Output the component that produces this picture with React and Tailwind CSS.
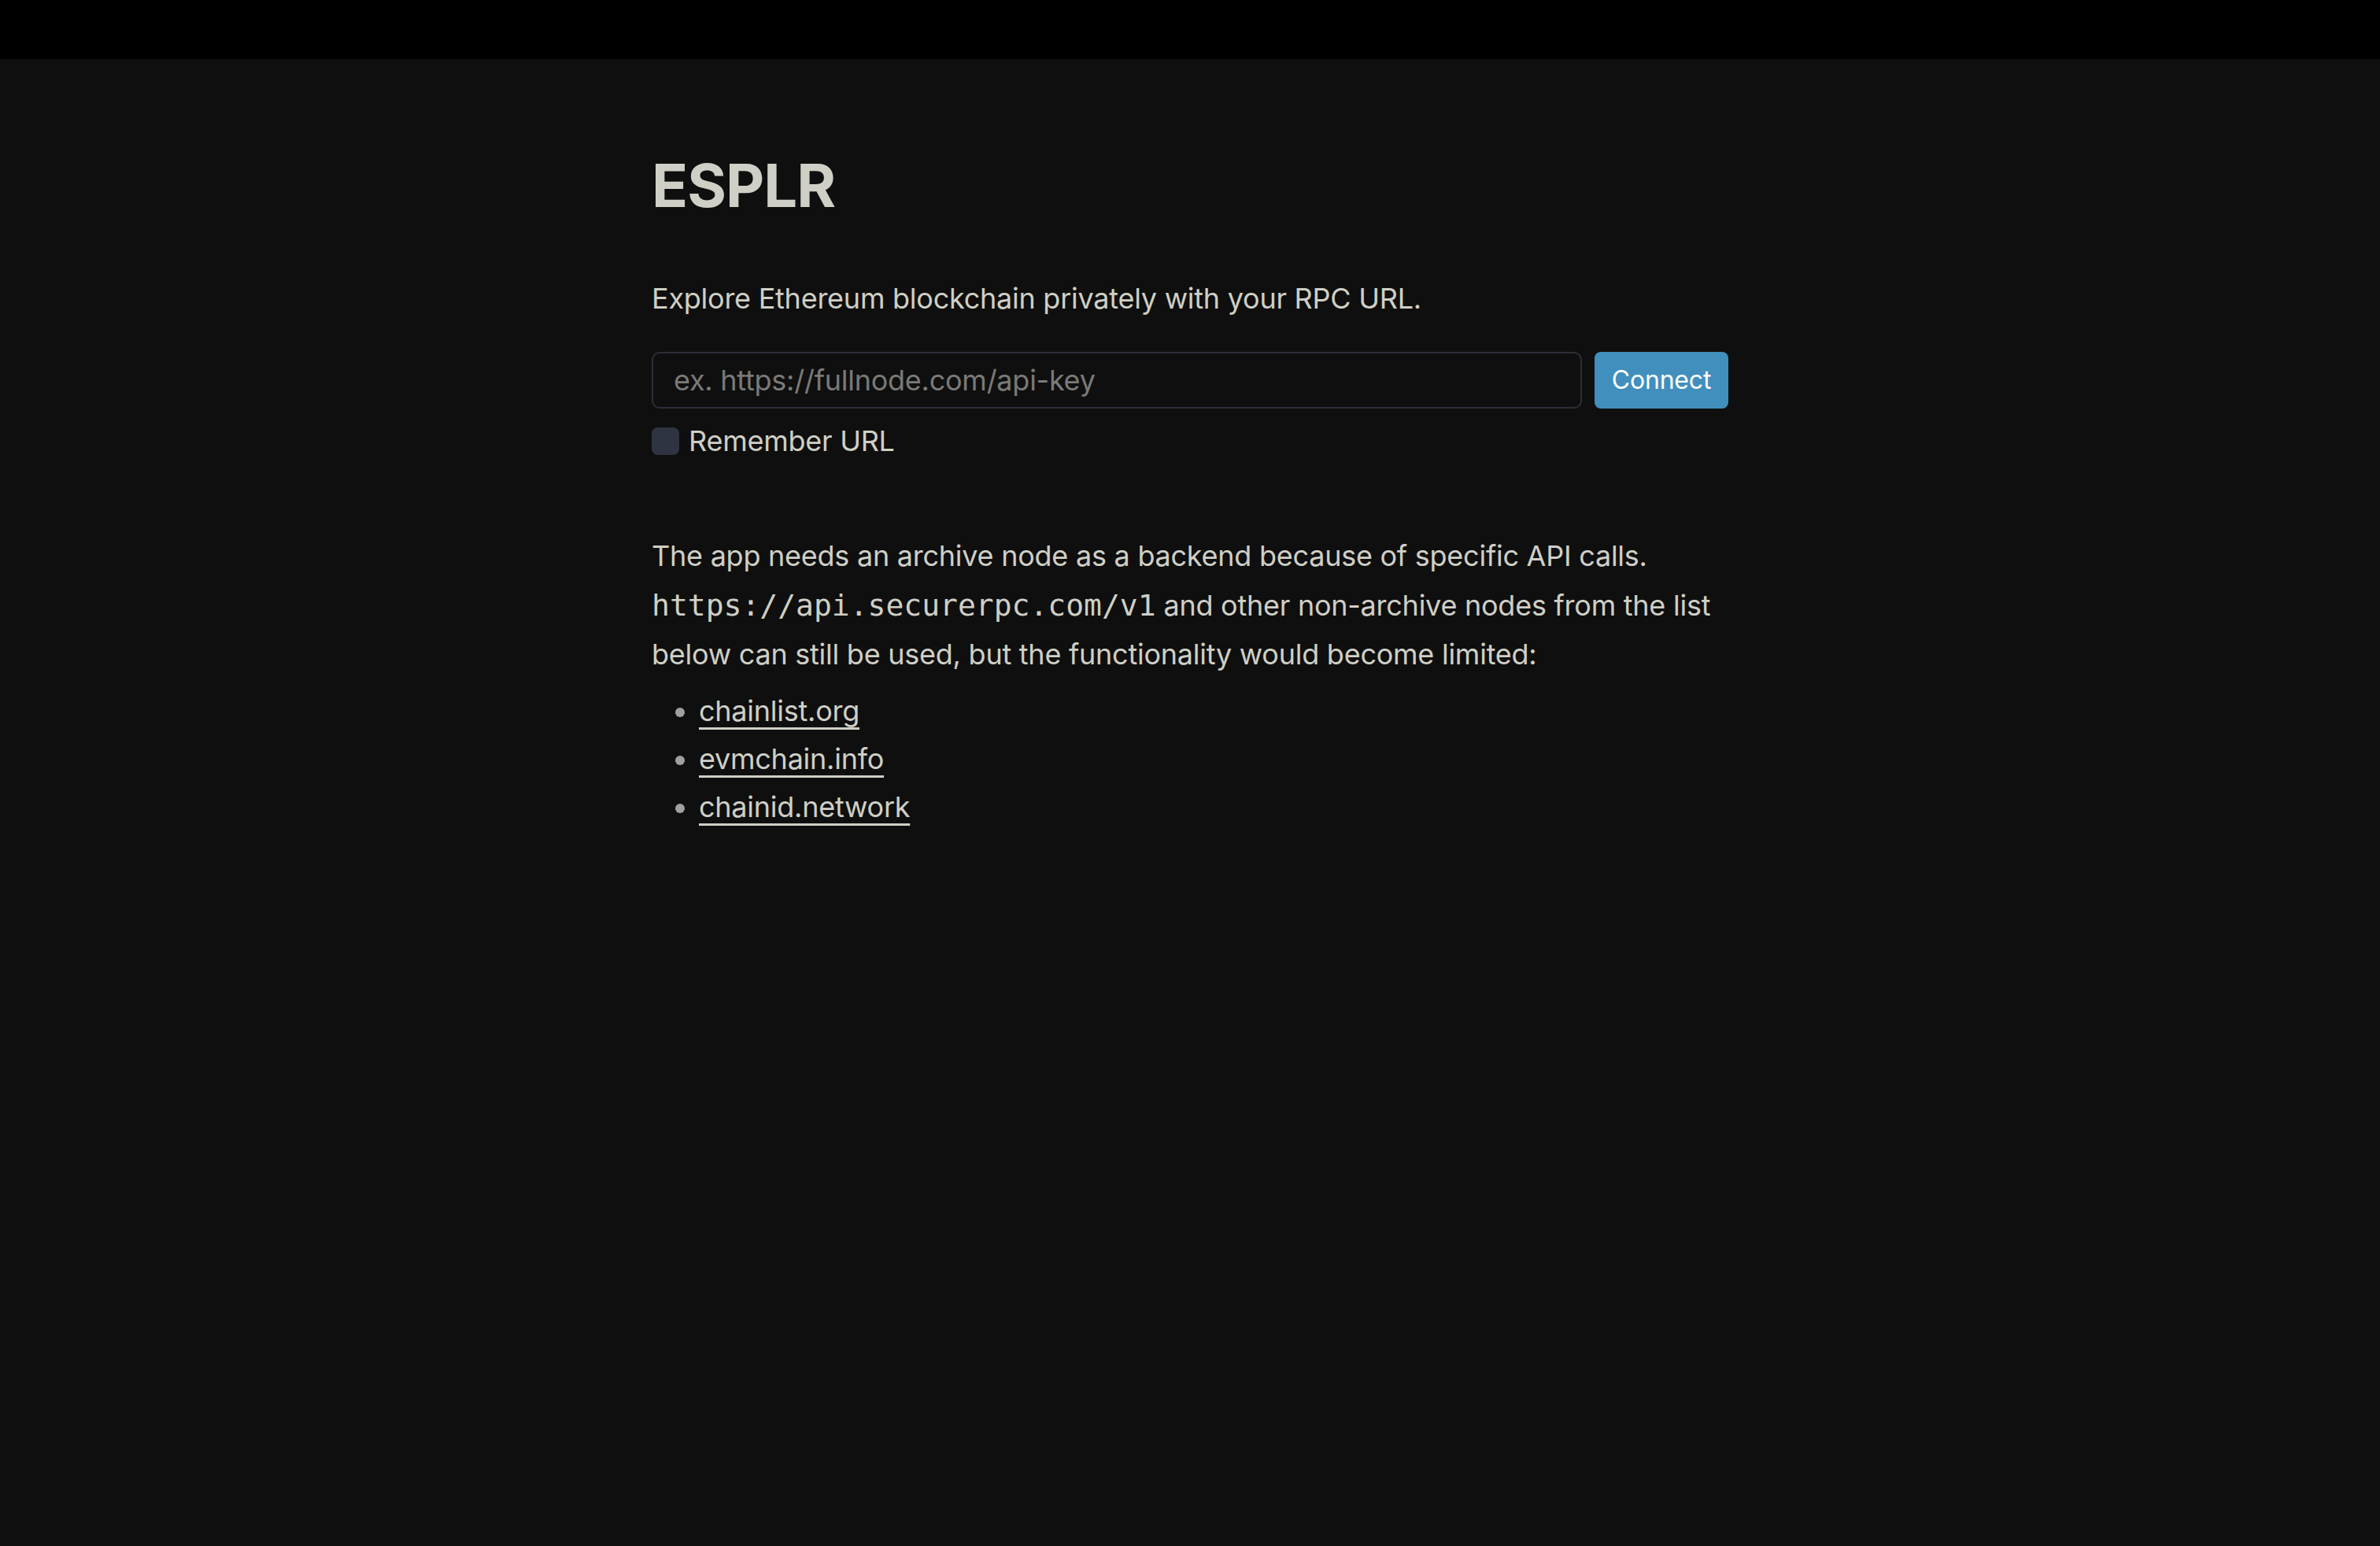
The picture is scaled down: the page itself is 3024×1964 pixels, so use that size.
import React, { useState } from 'react';

// ---- Links to public node lists ----
const nodeLists = [
  { label: 'chainlist.org', href: '#' },
  { label: 'evmchain.info', href: '#' },
  { label: 'chainid.network', href: '#' },
];

export default function App() {
  const [url, setUrl] = useState('');
  const [remember, setRemember] = useState(false);

  return (
    <div className="min-h-screen bg-[#0f0f0f] text-[#cfcfc6] font-['Inter','Noto_Sans',sans-serif]">
      {/* Top bar */}
      <div className="h-[75px] bg-black" />

      <main className="mx-auto w-[1368px] pt-[115px] text-[36px] leading-[1.7] tracking-[-0.25px]">
        <h1 className="text-[76px] font-bold leading-[1.2] tracking-[-1px]">ESPLR</h1>

        <p className="mt-[68px]">Explore Ethereum blockchain privately with your RPC URL.</p>

        {/* Connect form */}
        <form className="mt-[37px] flex gap-4" onSubmit={(e) => e.preventDefault()}>
          <input
            value={url}
            onChange={(e) => setUrl(e.target.value)}
            placeholder="ex. https://fullnode.com/api-key"
            className="h-[72px] flex-1 rounded-[10px] border-2 border-[#2c2f38] bg-[#0f0f0f] px-[26px] text-[36px] tracking-[-0.25px] text-[#cfcfc6] placeholder:text-[#7a7a78] outline-none"
          />
          <button
            type="submit"
            className="h-[72px] w-[170px] rounded-[8px] bg-[#418fbd] text-[32px] tracking-[-0.2px] text-white"
          >
            Connect
          </button>
        </form>

        <label className="mt-[11px] flex items-center gap-[12px] cursor-pointer">
          <input
            type="checkbox"
            checked={remember}
            onChange={(e) => setRemember(e.target.checked)}
            className="h-[35px] w-[35px] appearance-none rounded-[8px] bg-[#2f3442] checked:bg-[#418fbd]"
          />
          <span>Remember URL</span>
        </label>

        {/* Notes about archive nodes */}
        <p className="mt-[84px]">
          The app needs an archive node as a backend because of specific API calls.{' '}
          <code className="font-['DejaVu_Sans_Mono',monospace] text-[38px] tracking-normal">https://api.securerpc.com/v1</code>{' '}
          and other non-archive nodes from the list below can still be used, but the functionality would become limited:
        </p>

        <ul className="mt-[10px] pl-[60px] list-disc marker:text-[#a0a0a0]">
          {nodeLists.map((item) => (
            <li key={item.label}>
              <a
                href={item.href}
                className="underline decoration-[2.5px] underline-offset-[8px]"
              >
                {item.label}
              </a>
            </li>
          ))}
        </ul>
      </main>
    </div>
  );
}
